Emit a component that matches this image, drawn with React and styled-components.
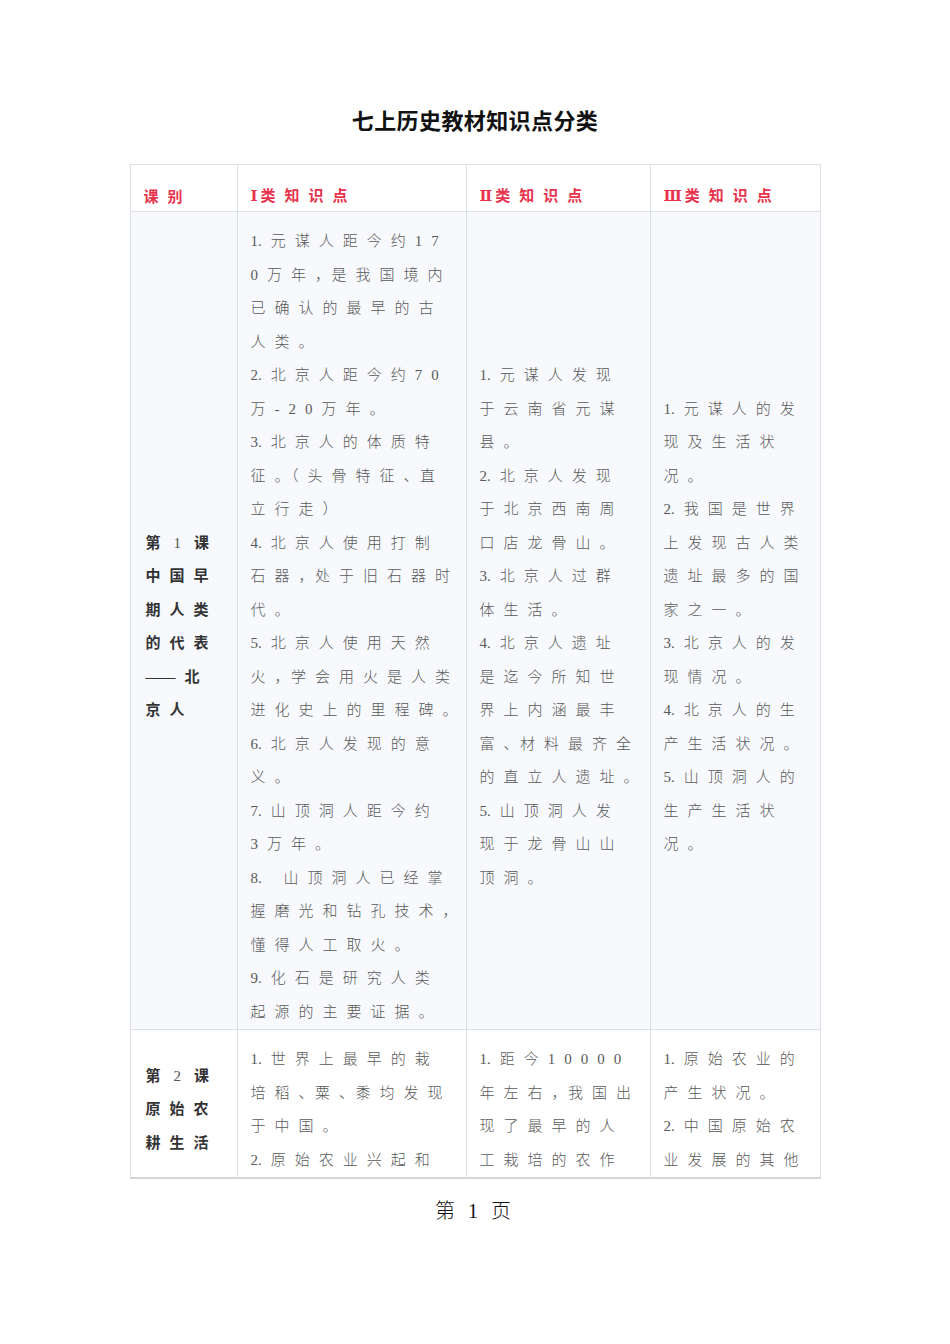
import styled, { createGlobalStyle } from "styled-components";

const GlobalStyle = createGlobalStyle`
  html, body {
    margin: 0;
    padding: 0;
    background: #ffffff;
  }
  body {
    font-family: "Liberation Serif", "Noto Sans CJK SC", serif;
  }
`;

const Page = styled.div`
  width: 950px;
  min-height: 1344px;
  padding-top: 104px;
  box-sizing: border-box;
`;

const Title = styled.h1`
  margin: 0;
  text-align: center;
  font-family: "Noto Sans CJK SC", sans-serif;
  font-size: 22px;
  line-height: 30px;
  font-weight: 700;
  letter-spacing: 0.4px;
  color: #111111;
`;

const Sheet = styled.table`
  margin: 30px auto 0;
  width: 690px;
  border-collapse: collapse;
  table-layout: fixed;
  border: 1px solid #d3d6db;
  border-bottom-width: 2px;
`;

const Col = styled.col`
  width: ${(p) => p.$w}px;
`;

const Row = styled.tr`
  background: ${(p) => (p.$tint ? "#f7f9fd" : "#ffffff")};
`;

const HeadCell = styled.th`
  padding: 20px 12px 5px 13px;
  border: 1px solid #dcdfe4;
  text-align: left;
  font-family: "Noto Sans CJK SC", sans-serif;
  font-size: 15px;
  line-height: 20px;
  font-weight: 700;
  letter-spacing: 9px;
  color: #e8334c;
  white-space: nowrap;
`;

const Roman = styled.span`
  font-family: "DejaVu Serif", "Liberation Serif", serif;
  font-weight: 700;
  font-size: 15px;
  letter-spacing: 0;
  margin-right: 3px;
`;

const Cell = styled.td`
  padding: 13px 12px 0 ${(p) => (p.$lead ? 15 : 13)}px;
  border: 1px solid #dcdfe4;
  vertical-align: middle;
  font-size: 15px;
  letter-spacing: 9px;
  font-weight: ${(p) => (p.$lead ? 700 : 300)};
  color: ${(p) => (p.$lead ? "#333333" : "#595959")};
`;

const Line = styled.div`
  line-height: 33.5px;
  white-space: nowrap;
`;

const Num = styled.span`
  letter-spacing: 0;
  margin-right: 9px;
`;

const Half = styled.span`
  font-feature-settings: "halt";
`;

const LessonNo = styled.span`
  font-weight: 400;
  margin: 0 4px;
  color: #555555;
`;

const Dash = styled.span`
  letter-spacing: 0;
  margin-right: 9px;
`;

const Footer = styled.div`
  margin-top: 18px;
  text-align: center;
  font-family: "Liberation Serif", "Noto Sans CJK SC", serif;
  font-size: 20px;
  line-height: 28px;
  font-weight: 300;
  letter-spacing: 4px;
  color: #111111;
`;

// 行首的序号紧排，行中的逗号、顿号、句号用半角字形
function renderLine(text) {
  const m = text.match(/^(\d+\.)(.*)$/);
  const head = m ? <Num>{m[1]}</Num> : null;
  const rest = m ? m[2] : text;
  const parts = [];
  let buf = "";
  [...rest].forEach((ch, i, arr) => {
    const squeeze = ch === "，" || ch === "、" || (ch === "。" && i < arr.length - 1);
    if (squeeze) {
      if (buf) parts.push(buf);
      buf = "";
      parts.push(<Half key={i}>{ch}</Half>);
    } else {
      buf += ch;
    }
  });
  if (buf) parts.push(buf);
  return (
    <>
      {head}
      {parts}
    </>
  );
}

const rows = [
  {
    tint: true,
    lesson: [
      <>第<LessonNo>1</LessonNo>课</>,
      "中国早",
      "期人类",
      "的代表",
      <><Dash>——</Dash>北</>,
      "京人",
    ],
    one: [
      "1.元谋人距今约17",
      "0万年，是我国境内",
      "已确认的最早的古",
      "人类。",
      "2.北京人距今约70",
      "万-20万年。",
      "3.北京人的体质特",
      "征。（头骨特征、直",
      "立行走）",
      "4.北京人使用打制",
      "石器，处于旧石器时",
      "代。",
      "5.北京人使用天然",
      "火，学会用火是人类",
      "进化史上的里程碑。",
      "6.北京人发现的意",
      "义。",
      "7.山顶洞人距今约",
      "3万年。",
      "8.\u00a0山顶洞人已经掌",
      "握磨光和钻孔技术，",
      "懂得人工取火。",
      "9.化石是研究人类",
      "起源的主要证据。",
    ],
    two: [
      "1.元谋人发现",
      "于云南省元谋",
      "县。",
      "2.北京人发现",
      "于北京西南周",
      "口店龙骨山。",
      "3.北京人过群",
      "体生活。",
      "4.北京人遗址",
      "是迄今所知世",
      "界上内涵最丰",
      "富、材料最齐全",
      "的直立人遗址。",
      "5.山顶洞人发",
      "现于龙骨山山",
      "顶洞。",
    ],
    three: [
      "1.元谋人的发",
      "现及生活状",
      "况。",
      "2.我国是世界",
      "上发现古人类",
      "遗址最多的国",
      "家之一。",
      "3.北京人的发",
      "现情况。",
      "4.北京人的生",
      "产生活状况。",
      "5.山顶洞人的",
      "生产生活状",
      "况。",
    ],
  },
  {
    tint: false,
    lesson: [<>第<LessonNo>2</LessonNo>课</>, "原始农", "耕生活"],
    one: [
      "1.世界上最早的栽",
      "培稻、粟、黍均发现",
      "于中国。",
      "2.原始农业兴起和",
    ],
    two: ["1.距今10000", "年左右，我国出", "现了最早的人", "工栽培的农作"],
    three: ["1.原始农业的", "产生状况。", "2.中国原始农", "业发展的其他"],
  },
];

export default function App() {
  return (
    <Page>
      <GlobalStyle />
      <Title>七上历史教材知识点分类</Title>
      <Sheet>
        <colgroup>
          <Col $w={107} />
          <Col $w={229} />
          <Col $w={184} />
          <Col $w={170} />
        </colgroup>
        <thead>
          <Row>
            <HeadCell>课别</HeadCell>
            <HeadCell>
              <Roman>Ⅰ</Roman>类知识点
            </HeadCell>
            <HeadCell>
              <Roman>Ⅱ</Roman>类知识点
            </HeadCell>
            <HeadCell>
              <Roman>Ⅲ</Roman>类知识点
            </HeadCell>
          </Row>
        </thead>
        <tbody>
          {rows.map((r, i) => (
            <Row key={i} $tint={r.tint}>
              <Cell $lead>
                {r.lesson.map((l, j) => (
                  <Line key={j}>{l}</Line>
                ))}
              </Cell>
              <Cell>
                {r.one.map((l, j) => (
                  <Line key={j}>{renderLine(l)}</Line>
                ))}
              </Cell>
              <Cell>
                {r.two.map((l, j) => (
                  <Line key={j}>{renderLine(l)}</Line>
                ))}
              </Cell>
              <Cell>
                {r.three.map((l, j) => (
                  <Line key={j}>{renderLine(l)}</Line>
                ))}
              </Cell>
            </Row>
          ))}
        </tbody>
      </Sheet>
      <Footer>第 1 页</Footer>
    </Page>
  );
}
